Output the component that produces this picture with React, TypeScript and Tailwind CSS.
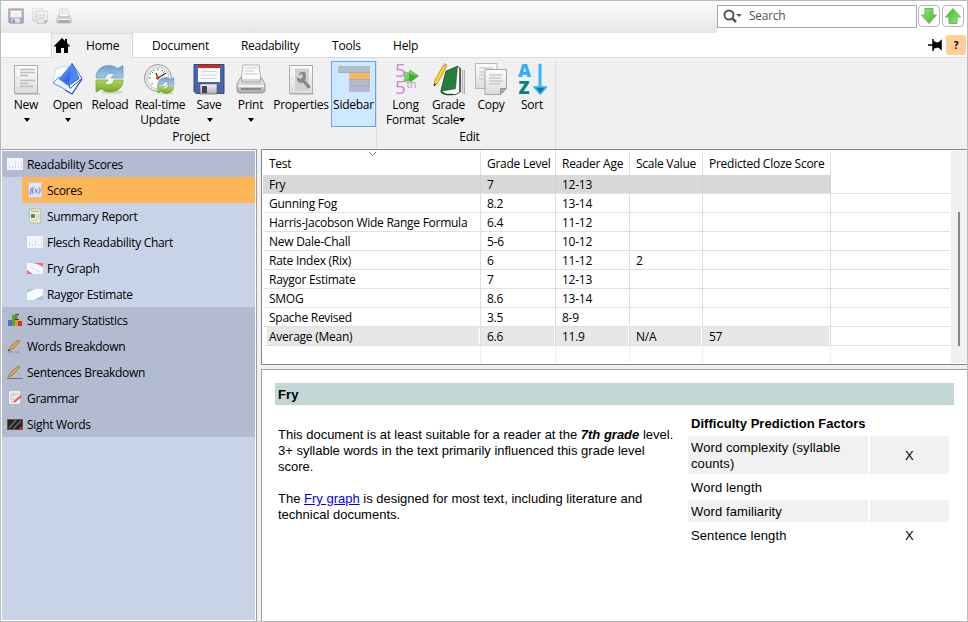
import type { ReactNode } from "react";

const GradientDefs = () => (
  <svg className="absolute size-0" aria-hidden="true">
    <defs>
      <linearGradient id="paper" x1="0" y1="0" x2="0" y2="1"><stop offset="0" stopColor="#fdfdfd" /><stop offset="1" stopColor="#dcdcdc" /></linearGradient>
      <linearGradient id="greenArrow" x1="0" y1="0" x2="1" y2="1"><stop offset="0" stopColor="#a4dc98" /><stop offset="1" stopColor="#2fbe12" /></linearGradient>
      <linearGradient id="blue" x1="0" y1="0" x2="1" y2="1"><stop offset="0" stopColor="#8cbcf0" /><stop offset=".6" stopColor="#2f66ea" /><stop offset="1" stopColor="#9cc4fa" /></linearGradient>
      <linearGradient id="blueLoop" x1="0" y1="0" x2="0" y2="1"><stop offset="0" stopColor="#6f9fd0" /><stop offset="1" stopColor="#a5c8e8" /></linearGradient>
      <linearGradient id="greenLoop" x1="0" y1="0" x2="0" y2="1"><stop offset="0" stopColor="#b4d75c" /><stop offset="1" stopColor="#75a822" /></linearGradient>
      <linearGradient id="metal" x1="0" y1="0" x2="0" y2="1"><stop offset="0" stopColor="#f8f8f8" /><stop offset="1" stopColor="#aaaaaa" /></linearGradient>
    </defs>
  </svg>
);

const Loops = () => (
  <g>
    <ellipse cx="18" cy="29" rx="11" ry="2" fill="#d5d5d5" />
    <path d="M2 15C2 7 8 2.500 15 2.500q5 0 8.500 3L29 2.500V15H17l3.500-3.500q-3-2-6-1Q11 11.500 11 15Z" fill="url(#blueLoop)" stroke="#6292c2" strokeWidth=".7" />
    <path d="M29 17c0 8-6 12-13 12q-5 0-8.500-3L2 29V17h12l-3.500 3.500q3 2 6 1Q20 20.500 20 17Z" fill="url(#greenLoop)" stroke="#78a22e" strokeWidth=".7" />
  </g>
);
const Floppy = () => (
  <g>
    <path d="M1 1.5h30v29H3l-2-2Z" fill="#4867a8" stroke="#304982" />
    <path d="M5 2h22v17H5z" fill="#fcfcfc" /><path d="M5 2h22v3H5z" fill="#dc2510" />
    <path d="M8 8.500h16M8 12h16M8 15.500h16" stroke="#d4d4d4" />
    <path d="M7 21h17v10H7z" fill="url(#metal)" stroke="#555" strokeWidth=".6" /><path d="M9 23h5v7H9z" fill="#3e4450" />
  </g>
);
const Printer = () => (
  <g>
    <path d="m8 2 16 0 2 15H6Z" fill="#fafafa" stroke="#b4b4b4" /><path d="M10 5h12M10 8h9M9.500 11h13" stroke="#c9c9c9" />
    <path d="M6 14 2 21v6q0 3 3 3h22q3 0 3-3v-6l-4-7-1 5H7Z" fill="url(#metal)" stroke="#999" />
    <path d="M3 23h26" stroke="#fff" strokeWidth="1.500" /><path d="M6 26h20" stroke="#777" strokeWidth="1.500" />
  </g>
);
const Pages = () => (
  <g>
    <path d="M.5.500H22v25H.500z" fill="url(#paper)" stroke="#b5b5b5" /><path d="M4 5h14M4 9h5M4 12h5M4 16h5" stroke="#c0c0c0" />
    <path d="M10 6.500h21.500v19l-6 6H10Z" fill="url(#paper)" stroke="#a5a5a5" /><path d="M14 12h14M14 15h12M14 18h14M14 21h11" stroke="#b5b5b5" />
    <path d="m25.500 31.500 0-6h6Z" fill="#aaa" stroke="#888" strokeWidth=".7" />
  </g>
);

const icons: Record<string, ReactNode> = {
  New: (<g><path d="M5 31h25" stroke="#ccc" strokeWidth="2" /><path d="M4.500 2.500h23v28h-23z" fill="url(#paper)" stroke="#aaa" /><path d="M7 4v25" stroke="#ccc" strokeDasharray="2 8" /><path d="M10 6.500h15M10 9.500h15M10 12.500h8M10 17.500h15M10 20.500h8M10 23.500h13" stroke="#bdbdbd" strokeWidth="1.500" /></g>),
  Open: (<g><path d="m4 6 9-3 5 3-9 14-8-2Z" fill="#fafdff" stroke="#b9d5ee" strokeWidth=".8" /><path d="M7 14 1 20l19 10-3-8Z" fill="#eaf5ff" stroke="#578cf0" /><path d="m30 16-10 15-7-4" fill="#fff" stroke="#1846e2" strokeWidth="1.300" /><path d="M20 .5 7 16l10 7 10-7Z" fill="url(#blue)" stroke="#4e83ee" strokeWidth=".7" /><path d="m20 .500 8 12 2 3-12 10-1-3 10-7Z" fill="#f2f7ff" stroke="#2458e4" /><path d="m20 1 7 13-10 9Z" fill="#548ced" opacity=".8" /></g>),
  Reload: <Loops />,
  Update: (<g><circle cx="14" cy="15" r="13.500" fill="#eeeeec" stroke="#999" /><circle cx="14" cy="15" r="11" fill="#fff" stroke="#c6c6c6" /><path d="M14 5.500v2M14 22.500v2M4.500 15h2M21.500 15h2M7.300 8.300l1.400 1.400M20.700 8.300l-1.400 1.400M7.300 21.700l1.400-1.400M9.200 6.700l.8 1.500M18.800 6.700l-.8 1.500M5.500 10.200l1.500.8" stroke="#555" /><path d="m12 10 2 5 8-5" fill="none" stroke="#333" strokeWidth="1.300" /><circle cx="13.800" cy="15" r="1.700" fill="#e02a1c" /><g transform="translate(12.500 13) scale(.6)"><Loops /></g></g>),
  Save: <Floppy />,
  Print: <Printer />,
  Properties: (<g><path d="M5 31h24" stroke="#ccc" strokeWidth="2" /><path d="M4.500 2.500h23v28h-23z" fill="url(#paper)" stroke="#aaa" /><path d="M10 5.500h14v22H10z" fill="#d2d2d2" /><path d="M7 5v25" stroke="#ccc" strokeDasharray="2 8" /><path d="M20 9a5.500 5.500 0 0 0-7 3l4-1 1 3-3 2-3-2q-1 5 4 6l2-.5 5 6q3 0 2-3l-5-5q2-4 0-8.500Z" fill="#888" /></g>),
  Sidebar: (<g><path d="M0 3h32v7H0z" fill="#b2bace" /><path d="M11 10h21v6H11z" fill="#ffb657" /><path d="M11 16h21v13H11z" fill="#b2bace" /><path d="M0 9.500h32M11 16.500h21M11 22.500h21" stroke="#a3abc0" /></g>),
  Format: (<g fontFamily="Open Sans, sans-serif" fill="#cf86ca"><text x="5" y="14" fontSize="19">5</text><text x="5" y="31" fontSize="19">5</text><text x="16.500" y="24.500" fontSize="10.500">th</text><path d="m15 9 4 1 1-3 8.500 6-8 6-1-2-5.500 2Z" fill="url(#greenArrow)" stroke="#75ae5e" strokeWidth=".7" /><path d="m19 10 4 2 5 1-8 6-1-2Z" fill="#36b81c" /></g>),
  Scale: (<g><path d="M13 8.300 24.500 3.300 27 5v24l-4 2.500H13L8 28Z" fill="#fff" stroke="#222" strokeWidth=".8" /><path d="M8 28q1 3 6 3.500h6" fill="none" stroke="#14542a" strokeWidth="1.500" /><path d="M13 8.300 24.500 3.300 22.500 25.700 8 28.300Z" fill="#267f41" stroke="#17572b" strokeWidth=".6" /><path d="M27 5v24" stroke="#333" strokeWidth="1.200" /><path d="M29.500 7v24M31.500 7v24" stroke="#b0b0b0" strokeWidth="1.200" /><path d="m1 23 1-6L10.500 2l3 1.700L5 19Z" fill="#ffd22d" stroke="#bd8611" strokeWidth=".8" /><path d="m10.500 2 1.200-2 3 1.700-1.200 2Z" fill="#e3a488" /><path d="m.8 23.500.5-3 2 1Z" fill="#222" /></g>),
  Copy: <Pages />,
  Sort: (<g fontFamily="Open Sans, sans-serif" fontWeight="800" fontSize="18"><text x="2" y="13.500" fill="#35aef8">A</text><text x="2.500" y="31" fill="#087f83">Z</text><path d="M24 2v22" stroke="#35b5ff" strokeWidth="3" strokeLinecap="round" /><path d="M18 24h12.500l-6.200 7Z" fill="#088090" stroke="#35b5ff" strokeWidth="1.700" strokeLinejoin="round" /></g>),
};

const Caret = () => <span className="block border-x-[3.5px] border-t-[4px] border-x-transparent border-t-black" />;

function Tool({ icon, lines, width, caret = false }: { icon: string; lines: string[]; width: string; caret?: boolean }) {
  return (
    <div className={`flex flex-col items-center h-[66px] shrink-0 ${width}`}>
      <svg className="size-8 mt-0.5 shrink-0 overflow-visible" viewBox="0 0 32 32">{icons[icon]}</svg>
      <div className="mt-[2px] h-[15px] leading-[15px] whitespace-nowrap">{lines[0]}</div>
      {lines[1] && <div className="flex h-[15px] items-center leading-[15px] whitespace-nowrap">{lines[1]}{lines[1] === "Scale" && <Caret />}</div>}
      {caret && <div className="mt-[6px] pl-px"><Caret /></div>}
    </div>
  );
}

const Chart = () => <g><path d="M0 2h16v12H0z" fill="#f4f5f8" /><path d="M2.500 12V8m3 4v-2m3 2V5m3 7v-2m3 2V5" stroke="#d0d2da" strokeDasharray="2 1" /></g>;
const sideIcons: Record<string, ReactNode> = {
  chart: <Chart />,
  scores: <g><path d="M1.500.500h13v15h-13z" fill="#e5e7ef" stroke="#c5c8d0" /><text x="2.500" y="11" fontSize="8.500" fontStyle="italic" fontFamily="Liberation Serif, serif" fill="#4a46e0">f(x)</text></g>,
  report: <g><path d="m2 1 11-1 1 15H3Z" fill="#d6e6c4" stroke="#9eb889" strokeWidth=".6" /><path d="M3.500 2.500h9v11h-9z" fill="#fffced" /><path d="M4 2.500h8v2H4z" fill="#f2b098" /><path d="M4 6h4v4H4z" fill="#399d48" /><path d="M9 6h4v5H9z" fill="#d6d6df" /><path d="M4 12h7" stroke="#e6a050" /></g>,
  fry: <g><path d="M0 3h16v11H0z" fill="#f6f8fc" /><path d="M4 3h12v4Q10 3 4 3ZM0 10v4h6Z" fill="#f3677a" /><path d="m3 7 10 5" stroke="#dde0ed" /></g>,
  raygor: <g><path d="M0 3h16v11H0z" fill="#f8fafc" /><path d="M0 3h8L0 7Zm16 6v5H7Z" fill="#a0d1cf" /></g>,
  stats: <g><path d="M1 8h4v6H1z" fill="#4d72b9" /><path d="M5 3h4v11H5z" fill="#58a827" /><path d="M8 8h3v6H8z" fill="#d99b34" /><path d="M11 9h4v5h-4z" fill="#e22d21" /><path d="M12 2.500H8L10.500 5 8 7.500h4" fill="none" stroke="#413c2c" /><path d="M5 3 7 1l2 2" fill="#85d84d" /></g>,
  words: <g><path d="M1 13 4 8 11 2l2 1-6 7-5 3Z" fill="#e1a24d" stroke="#8f6b3d" strokeWidth=".7" /><path d="m1 13 1-2 1 1Z" fill="#333" /><path d="M1 14h5m2 0h4" stroke="#8f8f98" /></g>,
  sentences: <g><path d="M1 13 4 8 11 2l2 1-6 7-5 3Z" fill="#e1a24d" stroke="#8f6b3d" strokeWidth=".7" /><path d="M0 14.500h16" stroke="#74747b" /></g>,
  grammar: <g><path d="M1.500.500h12v14h-12z" fill="#eee" stroke="#aaa" strokeWidth=".7" /><path d="M4 4h8M3 6h5M3 9h5M4 12h3" stroke="#c4b9b9" /><path d="m7 12 7-6" stroke="#e55452" strokeWidth="2" /></g>,
  sight: <g><path d="M.500 3.500h15v10H.500z" fill="#242424" stroke="#6b5238" /><path d="m2 12 7-8m-3 9 8-8" stroke="#686868" strokeWidth="1.500" /><circle cx="14" cy="12" r="1.500" fill="#e52c25" /></g>,
};

const sections: [string, string, string][] = [
  ["Readability Scores", "chart", "top"], ["Scores", "scores", "selected"], ["Summary Report", "report", "child"], ["Flesch Readability Chart", "chart", "child"], ["Fry Graph", "fry", "child"], ["Raygor Estimate", "raygor", "child"],
  ["Summary Statistics", "stats", "top"], ["Words Breakdown", "words", "top"], ["Sentences Breakdown", "sentences", "top"], ["Grammar", "grammar", "top"], ["Sight Words", "sight", "top"],
];

const rows = [
  ["Fry", "7", "12-13", "", ""], ["Gunning Fog", "8.2", "13-14", "", ""], ["Harris-Jacobson Wide Range Formula", "6.4", "11-12", "", ""],
  ["New Dale-Chall", "5-6", "10-12", "", ""], ["Rate Index (Rix)", "6", "11-12", "2", ""], ["Raygor Estimate", "7", "12-13", "", ""],
  ["SMOG", "8.6", "13-14", "", ""], ["Spache Revised", "3.5", "8-9", "", ""], ["Average (Mean)", "6.6", "11.9", "N/A", "57"],
];
const columns = "grid grid-cols-[218px_75px_74px_73px_128px_1fr]";

const BigArrow = ({ up = false }: { up?: boolean }) => (
  <div className="flex size-[22px] items-center justify-center rounded-[4px] border border-[#b8b8b8] bg-[#fdfdfd]">
    <svg className={up ? "size-4 rotate-180" : "size-4"} viewBox="0 0 16 16"><path d="M4 .500h8V7h3.500L8 15.500.500 7H4Z" fill="url(#greenArrow)" stroke="#69bd53" /></svg>
  </div>
);

export default function App() {
  return (
    <div className="relative flex h-[622px] w-[968px] flex-col overflow-hidden border border-[#bcbcbc] bg-[#f0f0f0] font-['Open_Sans',sans-serif] text-[12px] leading-4 tracking-[-0.26px] text-black">
      <GradientDefs />
      <header className="flex h-8 shrink-0 bg-white">
        <div className="flex w-[716px] gap-2 bg-linear-to-b from-[#fdfdfd] to-[#e6e6e6] pl-[7px] pt-[7px]">
          <svg className="size-4 opacity-50" viewBox="0 0 32 32"><Floppy /></svg>
          <svg className="size-4 opacity-80" viewBox="0 0 32 32"><Pages /></svg>
          <svg className="size-4 opacity-90" viewBox="0 0 32 32"><Printer /></svg>
        </div>
        <div className="mt-1 flex h-[23px] w-[200px] items-center border border-[#a6a6a6] bg-white pl-[5px] text-[#555]">
          <svg width="20" height="15" viewBox="0 0 20 15"><circle cx="6" cy="6" r="4.500" fill="none" stroke="#555" strokeWidth="2" /><path d="m9 9 4 4" stroke="#555" strokeWidth="2.500" /><path d="M13 5h6l-3 3Z" fill="#555" /></svg>
          <span className="ml-[6px] pb-px">Search</span>
        </div>
        <div className="ml-px mt-1 flex gap-[2px]"><BigArrow /><BigArrow up /></div>
      </header>
      <nav className="flex h-[25px] shrink-0 bg-white tracking-[-0.18px]">
        <div className="w-[50px] border-b border-[#dadada]" />
        <div className="flex w-[82px] items-center border-x border-t border-[#dadada] bg-[#f0f0f0]">
          <svg className="ml-[2px] size-4" viewBox="0 0 16 16"><path d="M0 8 8 0l3 3V1h2v4l3 3-1 1-1-1v7h-4v-5H7v5H2V8L1 9Z" /></svg>
          <span className="ml-4">Home</span>
        </div>
        <div className="flex flex-1 items-center border-b border-[#dadada]">
          <div className="flex pt-[2px]"><span className="ml-[19px] w-[89px]">Document</span><span className="w-[91px] tracking-[-0.3px]">Readability</span><span className="w-[61px]">Tools</span><span>Help</span></div>
          <div className="ml-auto flex items-center">
            <svg width="14" height="12" viewBox="0 0 14 12"><path d="M0 6h5M5 0v12M6 3l2 1h3l2-2v8l-2-2H8L6 9Z" stroke="#000" strokeWidth="1.500" /></svg>
            <span className="ml-1 mr-px flex size-5 items-center justify-center rounded-[2px] bg-[#ffcf98] text-[10px] font-bold">?</span>
          </div>
        </div>
      </nav>
      <section className="flex h-[91px] shrink-0 pt-[3px]">
        <div className="ml-[5px] flex w-[371px] flex-col border-r border-[#dedede]">
          <div className="flex">
            <Tool icon="New" lines={["New"]} width="w-10" caret /><Tool icon="Open" lines={["Open"]} width="w-[43px]" caret />
            <Tool icon="Reload" lines={["Reload"]} width="w-[42px]" /><Tool icon="Update" lines={["Real-time", "Update"]} width="w-[58px]" />
            <Tool icon="Save" lines={["Save"]} width="w-10" caret /><Tool icon="Print" lines={["Print"]} width="w-[43px]" caret />
            <Tool icon="Properties" lines={["Properties"]} width="w-[58px]" />
            <div className="ml-px bg-[#cfe7ff] outline outline-1 -outline-offset-1 outline-[#67a5e6]"><Tool icon="Sidebar" lines={["Sidebar"]} width="w-[45px]" /></div>
          </div>
          <div className="mt-[2px] text-center">Project</div>
        </div>
        <div className="flex w-[179px] flex-col border-r border-[#dedede] pl-[7px]">
          <div className="flex"><Tool icon="Format" lines={["Long", "Format"]} width="w-[43px]" /><Tool icon="Scale" lines={["Grade", "Scale"]} width="w-[43px]" /><Tool icon="Copy" lines={["Copy"]} width="w-[42px]" /><Tool icon="Sort" lines={["Sort"]} width="w-10" /></div>
          <div className="mt-[2px] text-center">Edit</div>
        </div>
      </section>
      <main className="flex min-h-0 flex-1">
        <aside className="w-64 border-r border-t border-[#9a9da5] bg-white p-px">
          <div className="h-full bg-[#c8d3e7]">
            {sections.map(([name, icon, kind]) => (
              <div key={name} className={kind === "top" ? "flex h-[26px] items-center bg-[#b2bbcf] pl-[5px]" : kind === "selected" ? "ml-5 flex h-[26px] items-center bg-[#ffb657] pl-[5px]" : "flex h-[26px] items-center pl-[25px]"}>
                <svg className="size-4" viewBox="0 0 16 16">{sideIcons[icon]}</svg><span className="ml-1 whitespace-nowrap pt-[2px] tracking-[-0.31px]">{name}</span>
              </div>
            ))}
          </div>
        </aside>
        <div className="ml-1 flex flex-1 flex-col">
          <section className="flex h-[216px] border border-r-0 border-[#82868f] bg-white py-px pl-px">
            <div className="flex min-w-0 flex-1 flex-col">
              <div className={`${columns} relative h-6 shrink-0`}>
                {["Test", "Grade Level", "Reader Age", "Scale Value", "Predicted Cloze Score", ""].map((h, i) => <div key={i} className={i < 5 ? "border-r border-[#dfdfdf] pl-[6px] pt-[5px] whitespace-nowrap" : ""}>{h}</div>)}
                <svg className="absolute left-[105px] top-0" width="9" height="6" viewBox="0 0 9 6"><path d="m1 1 3.500 3.500L8 1" fill="none" stroke="#888" /></svg>
              </div>
              {rows.map((row, r) => (
                <div key={row[0]} className={`${columns} h-[19px] shrink-0 border-b border-[#e0e0e0]`}>
                  {[...row, ""].map((v, i) => (
                    <div key={i} className={i === 5 ? "" : r === 0 ? "h-[18px] border-r border-[#d2d2d2] bg-[#d8d8d8] pl-[6px] pt-[2px] whitespace-nowrap" : r === 8 ? `h-[18px] border-r border-[#dfdfdf] bg-clip-content bg-[#e7e7e7] pr-px whitespace-nowrap ${i === 0 ? "pl-1" : ""}` : "h-[18px] border-r border-[#dfdfdf] pl-[6px] pt-[2px] whitespace-nowrap"}>
                      {r === 8 && i < 5 ? <div className={i === 0 ? "h-[18px] pl-[2px] pt-[2px]" : "h-[18px] pl-[6px] pt-[2px]"}>{v}</div> : v}
                    </div>
                  ))}
                </div>
              ))}
              <div className={`${columns} flex-1`}>{[0, 1, 2, 3, 4].map((i) => <div key={i} className="border-r border-[#e8effb]" />)}</div>
            </div>
            <div className="ml-px w-4 bg-[#f0f0f0] pl-[7px] pt-[61px]"><div className="h-[134px] w-0.5 bg-[#858585]" /></div>
          </section>
          <article className="mt-1 flex-1 border-l border-t border-[#a0a0a0] bg-white pl-[13px] pt-[13px] font-['Liberation_Sans',sans-serif] text-[13px] tracking-normal">
            <h1 className="h-[22px] w-[679px] bg-[#c2d6d5] pl-[3px] text-[13px] font-bold leading-[24px] tracking-[0.15px]">Fry</h1>
            <div className="flex">
              <div className="w-[413px] pl-[3px] pt-[22px]">
                <p>This document is at least suitable for a reader at the <b><i>7th grade</i></b> level.<br />3+ syllable words in the text primarily influenced this grade level<br />score.</p>
                <p className="mt-4">The <a className="text-[#0000ee] underline">Fry graph</a> is designed for most text, including literature and<br />technical documents.</p>
              </div>
              <div className="w-[261px] pt-[9px] tracking-[0.1px]">
                <h2 className="h-[22px] pl-[3px] pt-[2px] font-bold tracking-[0.04px]">Difficulty Prediction Factors</h2>
                {[["Word complexity (syllable counts)", "X"], ["Word length", ""], ["Word familiarity", ""], ["Sentence length", "X"]].map(([label, mark], i) => (
                  <div key={label} className="mb-[2px] flex gap-[2px]">
                    <div className={`w-[180px] px-[3px] pb-[2px] pt-1 ${i % 2 === 0 ? "bg-[#f1f1f1]" : ""}`}>{label}</div>
                    <div className={`flex flex-1 items-center justify-center pt-[2px] ${i % 2 === 0 ? "bg-[#f1f1f1]" : ""}`}>{mark}</div>
                  </div>
                ))}
              </div>
            </div>
          </article>
        </div>
      </main>
    </div>
  );
}
